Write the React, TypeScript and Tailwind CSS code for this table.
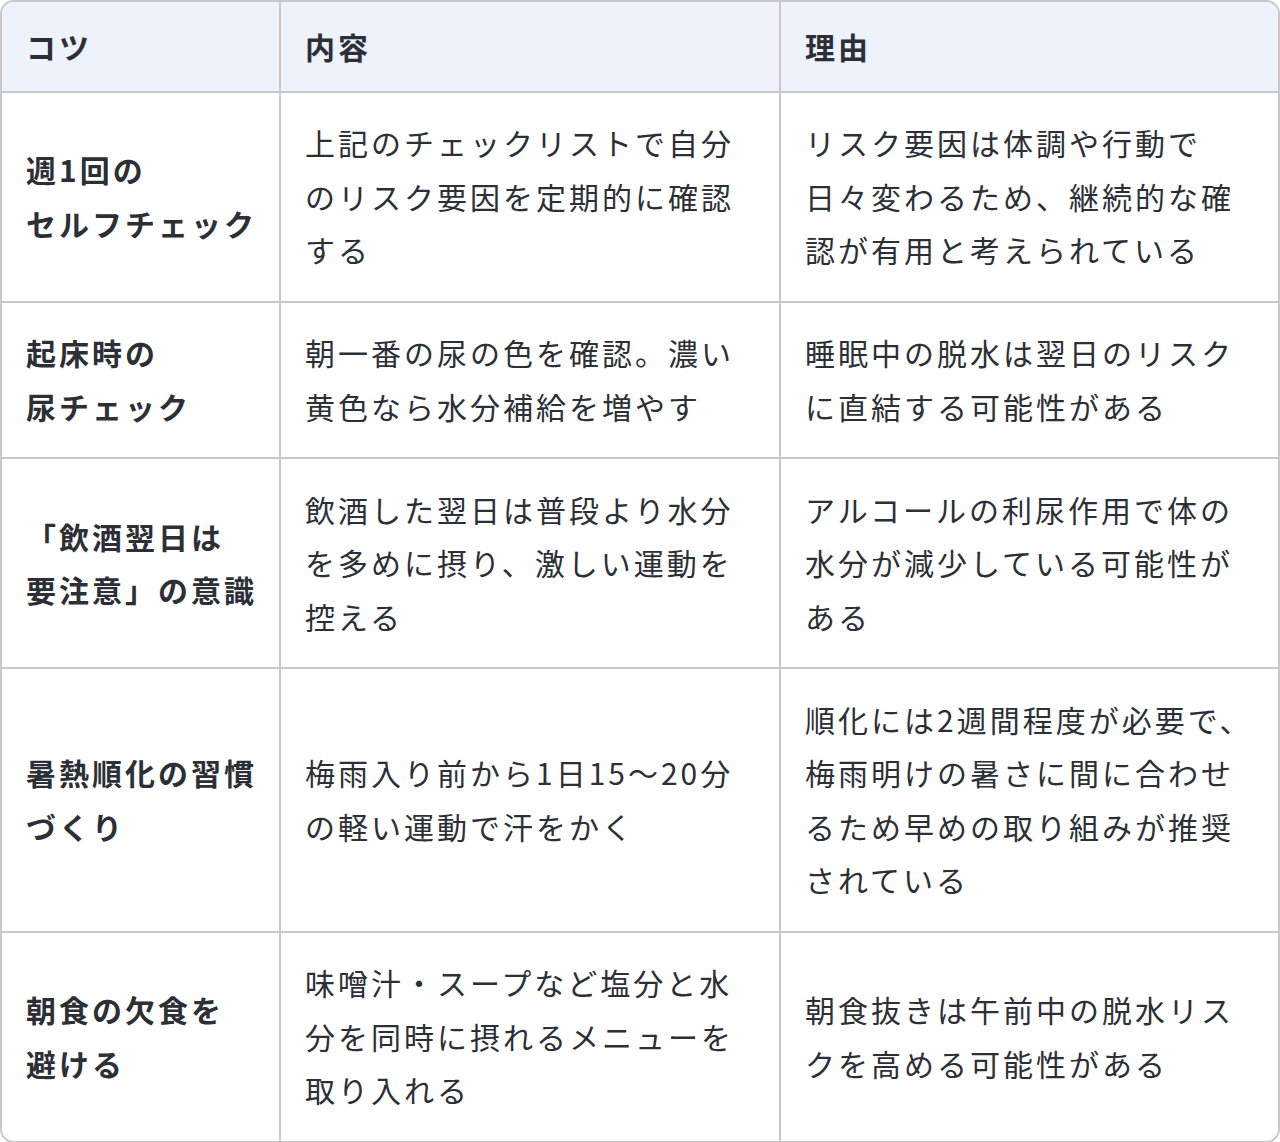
const rows: { tip: string[]; detail: string; reason: string }[] = [
  {
    tip: ['週1回の', 'セルフチェック'],
    detail: '上記のチェックリストで自分のリスク要因を定期的に確認する',
    reason: 'リスク要因は体調や行動で日々変わるため、継続的な確認が有用と考えられている',
  },
  {
    tip: ['起床時の', '尿チェック'],
    detail: '朝一番の尿の色を確認。濃い黄色なら水分補給を増やす',
    reason: '睡眠中の脱水は翌日のリスクに直結する可能性がある',
  },
  {
    tip: ['「飲酒翌日は', '要注意」の意識'],
    detail: '飲酒した翌日は普段より水分を多めに摂り、激しい運動を控える',
    reason: 'アルコールの利尿作用で体の水分が減少している可能性がある',
  },
  {
    tip: ['暑熱順化の習慣', 'づくり'],
    detail: '梅雨入り前から1日15〜20分の軽い運動で汗をかく',
    reason: '順化には2週間程度が必要で、梅雨明けの暑さに間に合わせるため早めの取り組みが推奨されている',
  },
  {
    tip: ['朝食の欠食を', '避ける'],
    detail: '味噌汁・スープなど塩分と水分を同時に摂れるメニューを取り入れる',
    reason: '朝食抜きは午前中の脱水リスクを高める可能性がある',
  },
];

export default function App() {
  return (
    <div
      className="w-[1280px] bg-white text-[#2c3036]"
      style={{ fontFamily: '"Noto Sans CJK JP", "Noto Sans", sans-serif' }}
    >
      <div className="overflow-hidden rounded-[14px] border-2 border-[#c9c9cd]">
        <table className="w-full table-fixed border-separate border-spacing-0 text-[30px] leading-[53.5px] tracking-[0.1em]">
          <colgroup>
            <col className="w-[277px]" />
            <col className="w-[500px]" />
            <col />
          </colgroup>
          <thead>
            <tr className="bg-[#eef2fb] text-left font-bold">
              <th className="px-6 py-[17.5px] align-middle">コツ</th>
              <th className="border-l-2 border-[#c9c9cd] px-6 py-[17.5px] align-middle">内容</th>
              <th className="border-l-2 border-[#c9c9cd] px-6 py-[17.5px] align-middle">理由</th>
            </tr>
          </thead>
          <tbody>
            {rows.map((r) => (
              <tr key={r.detail}>
                <td className="border-t-2 border-[#c9c9cd] px-6 py-[23.75px] align-middle font-bold">
                  {r.tip.map((line) => (
                    <span key={line} className="block whitespace-nowrap">
                      {line}
                    </span>
                  ))}
                </td>
                <td className="border-l-2 border-t-2 border-[#c9c9cd] px-6 py-[23.75px] align-middle">
                  {r.detail}
                </td>
                <td className="border-l-2 border-t-2 border-[#c9c9cd] px-6 py-[23.75px] align-middle">
                  {r.reason}
                </td>
              </tr>
            ))}
          </tbody>
        </table>
      </div>
    </div>
  );
}
